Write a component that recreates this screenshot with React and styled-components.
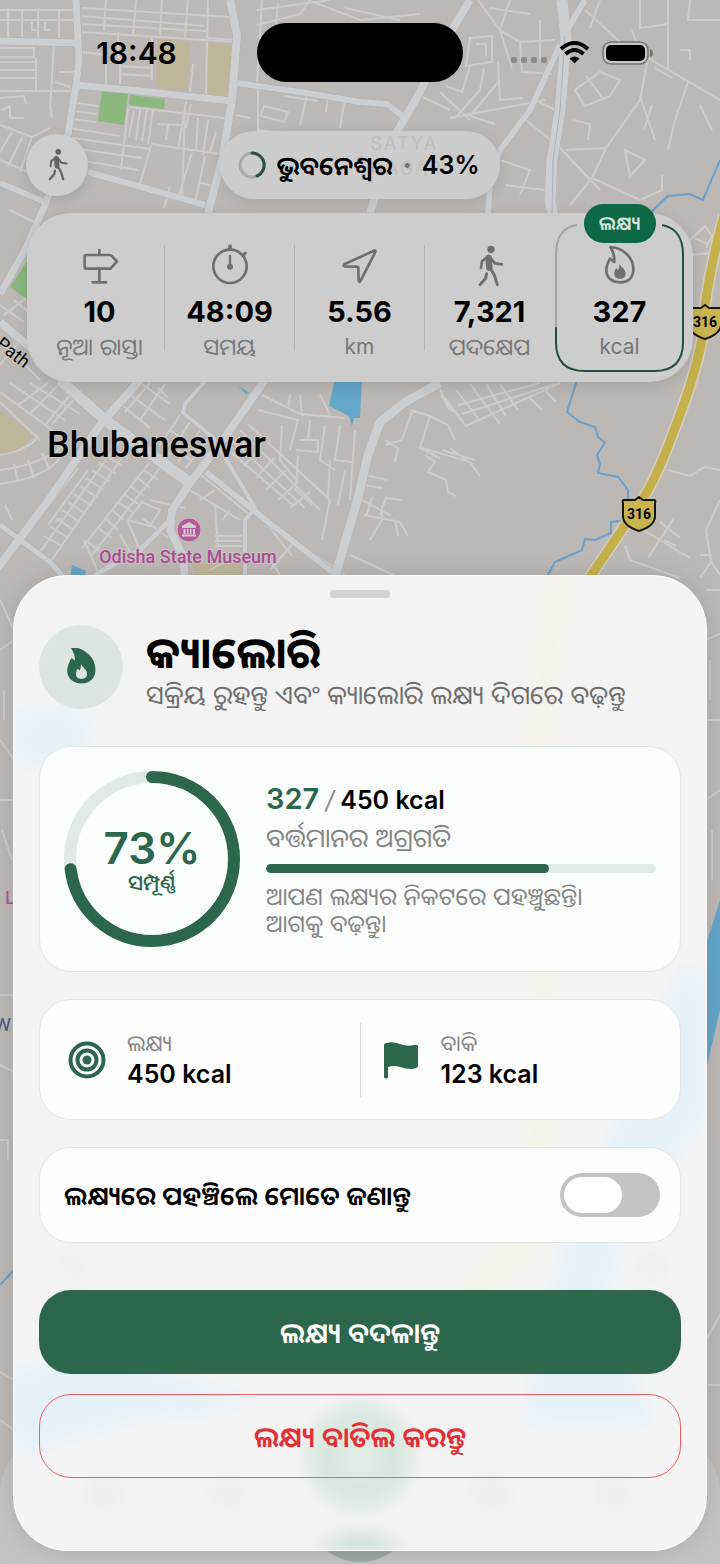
import React, { useState } from "react";
import styled, { createGlobalStyle } from "styled-components";

const GREEN = "#2c664d";

const MAJOR_ROADS = [
  { d: "M76 0 L79 60 L76 85 L68 135 L58 170 L45 205 L25 250 L0 294", w: 6 },
  { d: "M0 41 L78 43", w: 6 },
  { d: "M76 85 L130 90 L232 101", w: 6 },
  { d: "M230 0 L237 35 L232 100 L222 160 L208 213", w: 7 },
  { d: "M237 83 L300 92 L360 102 L387 104 L405 118", w: 5 },
  { d: "M0 183 L45 202", w: 5 },
  { d: "M88 172 L205 205", w: 5 },
  { d: "M470 0 L440 50 L420 92 L395 135 L370 213", w: 7 },
  { d: "M562 0 L566 40 L560 110 L552 160 L550 200 L553 215", w: 10 },
  { d: "M585 0 L566 32", w: 5 },
  { d: "M560 45 L530 110 L500 150 L490 180 L488 215", w: 5 },
  { d: "M0 322 L36 352 L80 400", w: 7 },
  { d: "M60 380 L105 420 L190 483", w: 10 },
  { d: "M140 380 L100 425 L50 498 L15 545 L-4 570", w: 7 },
  { d: "M265 380 L225 437 L190 483 L172 510 L170 530 L183 556 L185 580", w: 7 },
  { d: "M208 378 L185 404 L183 413 L213 437 L255 508 L245 520 L245 580", w: 3 },
  { d: "M206 472 L262 517 L340 578", w: 5 },
  { d: "M440 383 L405 402 L380 422 L368 455 L358 498 L334 580", w: 8 },
  { d: "M0 525 L50 562 L66 580", w: 4 },
  { d: "M168 522 L140 550 L100 572 L90 580", w: 4 },
];

const MINOR_ROADS = [
  // north west
  "M0 10 H75 M0 20 H76 M8 8 V41 M22 9 V41 M38 8 V41 M59 10 V41 M32 22 V30 H37 M45 22 V30 H50",
  "M0 48 H34 V57 H0 M0 62 H36 M0 70 H36 M0 78 H36 M36 58 V90 M54 43 L50 110 M0 91 L72 91 M59 72 H74 M55 82 L70 87",
  "M0 98 L24 96 L26 104 M2 110 L10 106 V118 H24 M50 105 L52 118 M0 125 L32 137 L50 128 M32 137 L20 172 M12 132 L0 152 M22 138 L8 166 M0 160 L28 172",
  "M82 8 L230 17 M82 16 L205 26 M82 24 L206 31 M82 32 L236 42 M106 0 L104 30 M136 0 L133 34 M162 0 L160 35 M188 0 L185 38 M208 0 L206 94 M118 32 V58",
  "M82 52 L106 55 V84 M120 55 V84 M120 66 L152 68 M152 38 V80 M120 74 L152 76 M193 64 L190 92 M207 38 L236 40",
  // city centre blocks
  "M76 103 L98 106 M74 111 L97 114 M72 119 L96 122 M69 128 L120 136 M66 137 L150 149 M64 147 L142 158 M60 157 L138 170 M128 108 L121 170 M134 110 L129 137 M140 110 L136 140 M147 110 L142 141 M153 110 L148 144",
  "M129 107 L225 118 M186 102 L178 150 M191 104 L186 128 M151 144 L220 154 M198 118 L196 150 M157 124 L182 125 M168 125 L166 140 M208 120 L203 155 M216 132 L210 152 M151 146 L140 184 M192 153 L178 198 M205 156 L195 203 M170 186 L164 208 M198 182 L212 186 M185 110 L182 200",
  // north east
  "M257 10 L330 0 M257 25 L300 14 L310 0 M262 0 L257 83 M278 4 L276 24 M308 0 L360 20 L420 14 M262 55 L290 48 M345 8 L400 20",
  "M264 106 L288 112 L284 122 L261 116 Z M236 115 L250 118 M258 84 V130 L300 135 M307 95 L300 125 M328 96 L326 112 M345 98 L340 128 M284 96 L318 101",
  "M478 0 L500 30 L520 42 L555 40 M490 8 L530 14 M510 0 L500 30 L512 68 M470 38 L492 36 V62 L466 66 Z M476 44 H486 V56 M520 42 L522 72 L552 74 M540 20 V58 M470 66 L462 92 L446 86 M484 68 L480 90 L455 118 M498 62 L500 100 L522 98 M500 80 L470 116 L495 124 M420 96 L450 110 M440 92 L470 120 M450 118 L545 100",
  "M585 10 L620 42 L648 58 L640 100 L606 148 L565 150 M600 0 L590 28 M640 0 V28 L668 24 M668 0 V70 M632 30 L640 54 M690 0 L688 20 H720 M648 58 L720 100 M688 82 L675 120 L668 150 M575 90 L600 72 L620 80 L610 96 L585 106 Z M586 76 L604 100 M572 120 L590 124 L588 140",
  "M640 96 L655 140 M652 105 L644 130 M535 100 L560 112 M520 115 L560 148 L600 190 M606 148 L592 178 L570 205 M592 178 L640 200 M625 150 L645 160 L630 176 Z M500 160 L530 170 L520 195 M505 185 L545 190 M662 175 V190 L640 200 M690 60 V50 H680 M700 105 L712 130 M655 68 L672 78",
  // west of the stats card
  "M0 305 L24 322 M14 300 L36 318 M4 315 L26 298 M0 340 L40 380 M20 340 L0 365 M10 210 L40 225",
  // south west
  "M0 392 L55 432 M10 383 L65 420 M30 383 L80 414 M0 402 L40 440 M0 470 Q40 465 65 445 M0 484 Q45 478 60 458 M14 464 L18 482 M28 460 L34 478 M42 453 L50 470 M0 455 Q30 450 38 436",
  "M60 383 L30 414 M82 390 L52 424 M48 383 L18 405 M70 395 L45 425",
  "M78 468 L30 530 M64 478 L20 535 M88 470 L48 525 M5 505 L12 520",
  "M120 440 L40 552 M130 446 L52 560 M110 446 L128 458 M104 454 L122 466 M98 462 L116 474 M92 470 L110 482 M86 478 L104 490 M80 486 L98 498 M74 494 L92 506 M68 502 L86 514 M62 510 L80 522 M56 518 L74 530 M50 526 L68 538 M55 522 L62 518 M44 536 L62 546",
  "M160 468 L92 555 M150 462 L82 548 M144 470 L158 480 M138 478 L150 488 M130 486 L144 496 M124 494 L138 504 M118 502 L132 512 M112 510 L124 520 M105 518 L118 530 M98 528 L112 538 M88 542 L100 552",
  "M128 520 L142 502 L160 510 L150 526 Z M142 518 L168 538 M128 522 L140 550 M84 540 L98 572 M120 535 L135 560",
  "M130 395 L165 420 M142 384 L170 404 M150 383 L125 412 M165 384 L140 420 M122 405 L150 428 M158 388 L168 398",
  "M180 415 L160 445 M190 422 L168 456 M200 430 L178 462 M208 438 L186 468 M170 430 L198 450 M164 440 L190 460",
  // south centre
  "M195 470 L250 515 M190 490 L240 520 M200 500 L215 490 M215 505 L218 548 M215 536 H242 M215 541 H242 M215 546 H242 M230 510 L222 520",
  "M240 430 L320 510 M232 440 L305 508 M226 448 L294 506 M248 424 L330 500 M232 456 L250 436 M244 466 L262 446 M256 478 L274 458 M266 490 L286 470 M278 500 L298 482 M290 508 L310 492",
  "M262 395 L300 414 L345 418 M258 410 L298 420 L290 450 M300 395 L302 416 M282 425 L280 460 L298 482 M300 440 H318 V452 L296 450 M310 420 L308 440 M325 425 L320 460 L335 470 M330 460 L328 500 M298 455 L296 490 L312 505 M330 500 L322 540 M340 425 L335 460 L352 462 M345 470 L338 505 M290 395 L288 408 M320 395 L330 415 M355 430 L350 500",
  "M256 510 L292 556 M300 545 L345 575 M268 556 L280 575 M350 555 L400 578 M362 500 L390 515",
  "M150 500 L185 508 M210 570 L235 556 M296 540 L270 570",
  // east side
  "M410 410 L430 416 L448 425 L455 440 M412 412 L402 440 L386 445 M430 416 L420 448 L440 458 M422 448 L470 462 L480 476 M442 450 L475 460 M450 448 L472 464 M425 455 L435 462 L428 472 L446 480 L448 492 L456 496 M385 440 L398 448 L395 462 M366 475 L388 480 M364 485 L382 488 M372 498 L366 516 M380 515 L386 498 L402 500 M364 515 L400 522 L408 536 M382 505 V520 L370 540 M395 520 L398 536",
  "M445 398 L466 426 L560 383 M456 390 L478 418 M470 384 L500 424 M486 384 L506 416 M500 384 L518 410 M438 384 L448 408 L455 412 M458 405 L540 383 M462 414 L555 384 M530 398 L542 410 M545 390 L556 402 M440 395 L452 410",
  "M668 470 L690 476 L704 467 L720 470 M720 500 L706 530 L711 562 L700 578 M711 562 L720 575 M640 528 L668 545 L690 558 M674 518 L648 558 M660 522 L670 530 L680 538 M664 540 L676 546 M625 545 L630 560 L680 578 M700 555 H712",
  "M690 240 L705 226 L712 236 L706 248 M694 238 L708 244 M690 255 L720 252",
  // strips beside the sheet
  "M0 600 L14 630 M0 650 L14 640 M4 690 V720 M0 740 L14 760 M0 800 H14 M2 830 L12 860 M0 995 H14 M0 1065 L14 1072 M0 1140 H8 V1160 M0 1372 L14 1380 M0 1420 L14 1430 M706 590 H720 M706 640 L720 634 M710 660 V700 M706 720 H720 M706 800 L720 790 M712 830 V880 M706 1340 L720 1315 M708 1385 H720",
];

const STATS = [
  { icon: "signpost", value: "10", label: "ନୂଆ ରାସ୍ତା" },
  { icon: "timer", value: "48:09", label: "ସମୟ" },
  { icon: "arrow", value: "5.56", label: "km", latin: true },
  { icon: "walk", value: "7,321", label: "ପଦକ୍ଷେପ" },
  { icon: "flame", value: "327", label: "kcal", latin: true, goal: true },
];

const FLAME_OUTER =
  "M31 0 C70 2 100 32 100 66 C100 92 84 106 60 106 C34 106 19 90 19 70 C19 56 24 46 30 35 L43 45 C44 28 40 14 31 0 Z";
const FLAME_INNER =
  "M58 48 C60 59 77 65 77 80 C77 90 70 95 60 95 C50 95 43 90 43 80 C43 73 45 68 49 64 L54 70 C58 63 59 55 58 48 Z";

function StatIcon({ name, size = 40 }) {
  const line = {
    fill: "none",
    stroke: "currentColor",
    strokeWidth: 8,
    strokeLinecap: "round",
    strokeLinejoin: "round",
  };

  return (
    <svg width={size} height={size} viewBox="0 0 120 120" overflow="visible" aria-hidden="true">
      {name === "signpost" && (
        <path {...line} d="M18 24 H88 Q92 24 95 27 L111 43 L95 61 Q92 65 88 65 H18 Q14 65 14 61 V28 Q14 24 18 24 Z M58 9 V24 M58 65 V106 M38 106 H78" />
      )}
      {name === "timer" && (
        <g {...line}>
          <circle cx="60" cy="58" r="50" />
          <path d="M60 -2 V6" strokeWidth="11" />
          <path d="M100 24 L106 18" strokeWidth="9" />
          <path d="M60 27 V58" strokeWidth="7" />
          <circle cx="60" cy="59" r="5" />
        </g>
      )}
      {name === "arrow" && (
        <path {...line} d="M102 11 L13 52 Q8 57 15 58 L51 59 Q55 59 55 63 L56 101 Q58 108 62 101 L106 15 Q107 9 102 11 Z" />
      )}
      {name === "walk" && (
        <g {...line}>
          <circle cx="63" cy="7" r="11" fill="currentColor" stroke="none" />
          <path d="M56 33 L58 62" strokeWidth="19" />
          <path d="M60 62 L73 84 L82 113" strokeWidth="9" />
          <path d="M50 80 L47 94 L30 113" strokeWidth="9" />
          <path d="M50 32 L36 43 L33 63" />
          <path d="M62 33 L75 49 L96 52" />
        </g>
      )}
      {name === "flame" && (
        <>
          <path {...line} d={FLAME_OUTER} />
          <path d={FLAME_INNER} fill="currentColor" />
        </>
      )}
    </svg>
  );
}

function Shield({ x, y }) {
  return (
    <g transform={`translate(${x} ${y})`}>
      <path
        d="M0 -17 L4 -14 H15 Q17 -14 16 -11 V2 Q16 12 0 17 Q-16 12 -16 2 V-11 Q-17 -14 -15 -14 H-4 Z"
        fill="#c9b44e"
        stroke="#17150c"
        strokeWidth="2"
      />
      <text x="0" y="5" textAnchor="middle" fontFamily="Roboto, sans-serif" fontSize="14" fontWeight="700">
        316
      </text>
    </g>
  );
}

function CityMap() {
  return (
    <MapCanvas viewBox="0 0 720 1564" preserveAspectRatio="xMidYMin slice" aria-hidden="true">
      <rect width="720" height="1564" fill="#bcb8b5" />
      <g fill="#8bb87d">
        <path d="M102 92 L128 93 L124 125 L98 121 Z M130 95 L165 99 L164 109 L129 105 Z M10 287 L28 260 V300 Z" />
      </g>
      <g fill="#bfb59b">
        <path d="M158 38 L190 42 L188 90 L156 88 Z M209 43 L232 45 L229 96 L204 94 Z M0 410 L35 435 L20 450 L0 456 Z M193 562 L245 564 V580 H193 Z" />
      </g>
      <g fill="#63a6c8">
        <path d="M335 378 H362 L360 418 L354 418 L352 426 L349 416 L329 406 Z M72 565 L86 571 L84 580 H70 Z M238 386 L250 393 L246 394 Z M720 900 L706 945 V1070 L720 1010 Z" />
      </g>
      <g fill="none" stroke="#cecccb" strokeWidth="2">
        {MINOR_ROADS.map((d, idx) => (
          <path key={idx} d={d} />
        ))}
      </g>
      <g fill="none" stroke="#adb0b9" strokeLinejoin="round">
        {MAJOR_ROADS.map((road, idx) => (
          <path key={idx} d={road.d} strokeWidth={road.w + 2} />
        ))}
      </g>
      <g fill="none" stroke="#cdced0" strokeLinejoin="round">
        {MAJOR_ROADS.map((road, idx) => (
          <path key={idx} d={road.d} strokeWidth={road.w + 1} />
        ))}
      </g>
      <path d="M565 36 L560 110 L553 160 L552 215" fill="none" stroke="#adb1ba" />
      <g fill="none" stroke="#69a0cd" strokeWidth="2">
        <path d="M720 160 L703 200 L690 194 L668 196 L650 213 M577 380 L567 412 L580 422 L595 427 L598 437 L605 443 L597 455 L600 464 L598 473 L618 477 L628 490 V520 L611 522 V533 L595 540 L585 539 L582 550 L555 562 L545 580 M0 1285 L14 1270" />
      </g>
      <g fill="none" strokeLinejoin="round">
        <path d="M724 215 Q704 290 702 340 Q694 380 673 433 Q655 482 640 503 L588 580" stroke="#d2cfc4" strokeWidth="12" />
        <path d="M724 215 Q704 290 702 340 Q694 380 673 433 Q655 482 640 503 L588 580" stroke="#c5b04b" strokeWidth="9" />
      </g>
      <Shield x={639} y={514} />
      <Shield x={705} y={322} />

      <g fontFamily="Roboto, sans-serif">
        <text x="47" y="457" fontSize="36" fontWeight="500" stroke="#c9c7c5" strokeWidth="2" paintOrder="stroke">
          Bhubaneswar
        </text>
        <text x="188" y="563" fontSize="18" fontWeight="500" fill="#ad4c92" textAnchor="middle" stroke="#c9c7c5" strokeWidth="2" paintOrder="stroke">
          Odisha State Museum
        </text>
        <text x="-5" y="346" fontSize="18" transform="rotate(38 -5 346)">
          Path
        </text>
        <text x="5" y="904" fontSize="19" fill="#ad4c92">
          L
        </text>
        <text x="-6" y="1031" fontSize="19" fill="#4a5683">
          W
        </text>
      </g>
      <circle cx="189" cy="530" r="12" fill="#b35c9c" stroke="#cbbfc7" />
      <path
        d="M189 522 L196 526 V528 H182 V526 Z M183.500 529 H185.500 V534 H183.500 Z M187 529 H188.500 V534 H187 Z M190 529 H191.500 V534 H190 Z M193 529 H195 V534 H193 Z M182 534.500 H196 V536.500 H182 Z"
        fill="#d3cdd1"
      />

      <rect x="0" y="1430" width="720" height="190" rx="64" fill="#c3c3c3" />
      <circle cx="360" cy="1508" r="54" fill="#9aa8a1" />
    </MapCanvas>
  );
}

// colours of the map showing faintly through the frosted sheet
function SheetGlow() {
  return (
    <GlowCanvas viewBox="0 0 694 976" preserveAspectRatio="none" aria-hidden="true">
      <defs>
        <filter id="soft" x="-50%" y="-50%" width="200%" height="200%">
          <feGaussianBlur stdDeviation="10" />
        </filter>
      </defs>
      <g filter="url(#soft)">
        <path d="M545 0 L525 180 L530 480 L520 660 L440 740" fill="none" stroke="#f4f3e4" strokeWidth="16" />
        <path d="M0 135 H70 V190 H0 Z M-20 810 L70 770 L250 830 L120 845 L0 880 Z" fill="#e4f1f9" />
        <path d="M670 390 L694 400 V540 L620 640 L590 720 L640 850 H510 L560 640 L600 560 Z" fill="#e4f1f9" />
        <circle cx="347" cy="882" r="52" fill="#d6e6de" />
        <rect x="332" y="858" width="10" height="48" fill="#eaf1ed" />
        <rect x="352" y="858" width="10" height="48" fill="#eaf1ed" />
        <path d="M300 976 Q347 950 394 976 Z" fill="#b9d2c6" />
        <g fill="#ededed">
          <circle cx="90" cy="920" r="20" />
          <circle cx="215" cy="920" r="20" />
          <circle cx="478" cy="920" r="22" />
          <circle cx="602" cy="920" r="20" />
          <circle cx="60" cy="692" r="16" />
          <circle cx="640" cy="692" r="16" />
        </g>
      </g>
    </GlowCanvas>
  );
}

function StatusBar() {
  return (
    <StatusWrap>
      <Clock>18:48</Clock>
      <Island />
      <StatusIcons>
        <svg width="36" height="6" viewBox="0 0 36 6" fill="#8d8a88">
          <rect width="6" height="6" rx="2" />
          <rect x="10" width="6" height="6" rx="2" />
          <rect x="20" width="6" height="6" rx="2" />
          <rect x="30" width="6" height="6" rx="2" />
        </svg>
        <svg width="31" height="23" viewBox="0 0 31 23">
          <path d="M2 8 Q15.500 -4 29 8" fill="none" stroke="#000" strokeWidth="4" />
          <path d="M6.500 13 Q15.500 5 24.500 13" fill="none" stroke="#000" strokeWidth="4" />
          <path d="M10.500 17.500 Q15.500 13.500 20.500 17.500 L15.500 22.500 Z" />
        </svg>
        <svg width="51" height="24" viewBox="0 0 51 24">
          <rect x="1" y="1" width="45" height="22" rx="8" fill="#c9c7c5" stroke="#75726f" strokeWidth="1.500" />
          <rect x="4" y="4" width="39" height="16" rx="5" />
          <path d="M48 8 Q51 9 51 12 Q51 15 48 16 Z" fill="#75726f" />
        </svg>
      </StatusIcons>
    </StatusWrap>
  );
}

function StatsPanel() {
  return (
    <StatsCard>
      {STATS.map((stat, idx) => (
        <React.Fragment key={stat.icon}>
          {idx > 0 && <StatDivider $hidden={stat.goal} />}
          <StatCell>
            {stat.goal && (
              <>
                <GoalOutline viewBox="0 0 130 150" preserveAspectRatio="none" aria-hidden="true">
                  <path d="M1 105 V32 C1 14 8 4 22 2" stroke="#a3a3a3" />
                  <path d="M108 2 C122 5 129 14 129 32 V120 Q129 149 100 149 H30 Q1 149 1 120 V105" stroke="#214f3b" />
                </GoalOutline>
                <GoalBadge>ଲକ୍ଷ୍ୟ</GoalBadge>
              </>
            )}
            <StatIcon name={stat.icon} />
            <StatValue>{stat.value}</StatValue>
            <StatLabel $latin={stat.latin}>{stat.label}</StatLabel>
          </StatCell>
        </React.Fragment>
      ))}
    </StatsCard>
  );
}

function App() {
  const [notify, setNotify] = useState(false);

  return (
    <Screen>
      <GlobalStyle />
      <CityMap />
      <Content>
        <StatusBar />
        <TopRow>
          <RoundButton type="button" aria-label="Walk">
            <StatIcon name="walk" size={31} />
          </RoundButton>
          <CityPill>
            <PillMapText aria-hidden="true">
              SATYA
              <br />
              NAGAR
            </PillMapText>
            <svg width="28" height="28" viewBox="0 0 28 28" fill="none" strokeWidth="3">
              <circle cx="14" cy="14" r="12" stroke="#a9abaa" />
              <path d="M14 2 A12 12 0 0 1 19 25" stroke="#27523f" strokeLinecap="round" />
            </svg>
            <City>ଭୁବନେଶ୍ୱର</City>
            <Dim>·</Dim>
            <span>43%</span>
          </CityPill>
        </TopRow>
        <StatsPanel />

        <Sheet>
          <SheetGlow />
          <SheetBody>
            <Handle />
            <SheetHeader>
              <HeaderIcon>
                <svg width="39" height="39" viewBox="0 0 120 120">
                  <path d={FLAME_OUTER} fill={GREEN} stroke={GREEN} strokeWidth="6" strokeLinejoin="round" />
                  <path d={FLAME_INNER} fill="#dde5e1" />
                </svg>
              </HeaderIcon>
              <div>
                <Title>କ୍ୟାଲୋରି</Title>
                <Subtitle>ସକ୍ରିୟ ରୁହନ୍ତୁ ଏବଂ କ୍ୟାଲୋରି ଲକ୍ଷ୍ୟ ଦିଗରେ ବଢ଼ନ୍ତୁ</Subtitle>
              </div>
            </SheetHeader>

            <ProgressCard>
              <RingWrap>
                <svg width="178" height="178" viewBox="0 0 178 178" fill="none" strokeWidth="12">
                  <circle cx="89" cy="89" r="82" stroke="#e0e9e4" />
                  <circle
                    cx="89"
                    cy="89"
                    r="82"
                    stroke={GREEN}
                    strokeLinecap="round"
                    pathLength="100"
                    strokeDasharray="73 100"
                    transform="rotate(-90 89 89)"
                  />
                </svg>
                <RingText>
                  <Percent>73%</Percent>
                  <Done>ସମ୍ପୂର୍ଣ୍ଣ</Done>
                </RingText>
              </RingWrap>
              <ProgressInfo>
                <Amount>
                  <strong>327</strong>
                  <i>/</i>
                  <span>450 kcal</span>
                </Amount>
                <Caption>ବର୍ତ୍ତମାନର ଅଗ୍ରଗତି</Caption>
                <Track>
                  <Fill style={{ width: `${(327 / 450) * 100}%` }} />
                </Track>
                <Message>
                  ଆପଣ ଲକ୍ଷ୍ୟର ନିକଟରେ ପହଞ୍ଚୁଛନ୍ତି।
                  <br />
                  ଆଗକୁ ବଢ଼ନ୍ତୁ।
                </Message>
              </ProgressInfo>
            </ProgressCard>

            <GoalCard>
              <GoalItem>
                <svg width="38" height="38" viewBox="0 0 38 38" fill="none" stroke={GREEN} strokeWidth="4">
                  <circle cx="19" cy="19" r="16.500" />
                  <circle cx="19" cy="19" r="9.500" />
                  <circle cx="19" cy="19" r="4.500" fill={GREEN} stroke="none" />
                </svg>
                <div>
                  <GoalLabel>ଲକ୍ଷ୍ୟ</GoalLabel>
                  <GoalValue>450 kcal</GoalValue>
                </div>
              </GoalItem>
              <GoalDivider />
              <GoalItem>
                <svg width="38" height="38" viewBox="0 0 38 38" fill={GREEN}>
                  <path d="M2 4 Q2 2 5 2 Q10 0 18 3 Q26 6 32 4 Q36 3 36 6 V24 Q36 28 29 28 Q24 28 18 26 Q12 24 6 26 V36 Q6 37.500 4 37.500 Q2 37.500 2 36 Z" />
                </svg>
                <div>
                  <GoalLabel>ବାକି</GoalLabel>
                  <GoalValue>123 kcal</GoalValue>
                </div>
              </GoalItem>
            </GoalCard>

            <NotifyCard>
              <NotifyLabel htmlFor="notify">ଲକ୍ଷ୍ୟରେ ପହଞ୍ଚିଲେ ମୋତେ ଜଣାନ୍ତୁ</NotifyLabel>
              <Switch id="notify" type="checkbox" checked={notify} onChange={(e) => setNotify(e.target.checked)} />
            </NotifyCard>

            <Actions>
              <ActionButton type="button">ଲକ୍ଷ୍ୟ ବଦଳାନ୍ତୁ</ActionButton>
              <ActionButton type="button" $danger>
                ଲକ୍ଷ୍ୟ ବାତିଲ କରନ୍ତୁ
              </ActionButton>
            </Actions>
          </SheetBody>
        </Sheet>
      </Content>
    </Screen>
  );
}

export default App;

const GlobalStyle = createGlobalStyle`
  * {
    box-sizing: border-box;
  }

  body {
    margin: 0;
    font-family: Inter, "Noto Sans Oriya", "Noto Sans", sans-serif;
    color: #000;
  }

  h1, p {
    margin: 0;
  }

  svg {
    display: block;
    flex-shrink: 0;
  }
`;

const Screen = styled.main`
  position: relative;
  min-height: 100vh;
  overflow: hidden;
`;

const MapCanvas = styled.svg`
  position: absolute;
  inset: 0;
  width: 100%;
  height: 100%;
`;

const Content = styled.div`
  position: relative;
`;

const StatusWrap = styled.header`
  display: grid;
  grid-template-columns: 1fr auto 1fr;
  align-items: center;
  padding: 23px 0 49px;
`;

const Clock = styled.div`
  padding-left: 16px;
  font-size: 30px;
  font-weight: 600;
  text-align: center;
`;

const Island = styled.div`
  width: 206px;
  height: 59px;
  border-radius: 30px;
  background: #000;
`;

const StatusIcons = styled.div`
  display: flex;
  align-items: center;
  gap: 12px;
  padding-left: 48px;

  svg:first-child {
    margin-top: 15px;
  }
`;

const TopRow = styled.div`
  display: grid;
  grid-template-columns: 1fr auto 1fr;
  align-items: center;
  padding: 0 26px;
`;

const RoundButton = styled.button`
  display: flex;
  align-items: center;
  justify-content: center;
  width: 62px;
  height: 62px;
  padding: 0;
  border: 0;
  border-radius: 50%;
  background: #cecece;
  color: #656565;
  box-shadow: 0 4px 14px rgba(0, 0, 0, 0.12);
`;

const CityPill = styled.div`
  position: relative;
  display: flex;
  align-items: center;
  gap: 10px;
  height: 68px;
  padding: 0 20px 0 18px;
  border-radius: 34px;
  background: rgba(205, 205, 206, 0.94);
  box-shadow: 0 4px 14px rgba(0, 0, 0, 0.1);
  font-size: 25px;
  font-weight: 600;
  white-space: nowrap;

  span {
    position: relative;
  }
`;

const City = styled.span`
  font-size: 26px;
`;

const Dim = styled.b`
  position: relative;
  color: #747474;
`;

const PillMapText = styled.div`
  position: absolute;
  top: 0;
  left: 150px;
  color: #bebebe;
  font-size: 18px;
  font-weight: 400;
  line-height: 25px;
  letter-spacing: 2px;
`;

const StatsCard = styled.section`
  display: flex;
  align-items: center;
  margin: 14px 27px 0;
  padding: 10px 9px 10px 8px;
  border-radius: 44px;
  background: #cdcdcd;
  box-shadow: 0 4px 16px rgba(0, 0, 0, 0.12);
`;

const StatCell = styled.div`
  position: relative;
  display: flex;
  flex: 1 1 0;
  flex-direction: column;
  align-items: center;
  min-width: 0;
  padding: 24px 0 12px;
  color: #6f6f6f;
`;

const StatDivider = styled.div`
  width: 1px;
  height: 106px;
  background: ${(props) => (props.$hidden ? "transparent" : "#b3b3b3")};
`;

const GoalOutline = styled.svg`
  position: absolute;
  inset: 0;
  width: 100%;
  height: 100%;
  fill: none;
  stroke-width: 2px;
`;

const GoalBadge = styled.div`
  position: absolute;
  top: -19px;
  left: 50%;
  width: 72px;
  margin-left: -36px;
  border-radius: 20px;
  background: #0d6846;
  color: #d8e2dd;
  font-size: 19px;
  font-weight: 600;
  line-height: 39px;
  text-align: center;
`;

const StatValue = styled.div`
  margin-top: 7px;
  color: #000;
  font-size: 29px;
  font-weight: 700;
  line-height: 36px;
`;

const StatLabel = styled.div`
  margin-top: 4px;
  color: #777;
  font-size: ${(props) => (props.$latin ? "21px" : "23px")};
  line-height: 26px;
  white-space: nowrap;
`;

const Sheet = styled.section`
  position: relative;
  margin: 193px 13px 13px;
  overflow: hidden;
  border: 1px solid #fff;
  border-radius: 54px;
  background: #f4f3f3;
  box-shadow: 0 0 24px rgba(0, 0, 0, 0.12);
`;

const GlowCanvas = styled.svg`
  position: absolute;
  inset: 0;
  width: 100%;
  height: 100%;
`;

const SheetBody = styled.div`
  position: relative;
  padding: 14px 25px 72px;
`;

const Handle = styled.div`
  width: 60px;
  height: 8px;
  margin: 0 auto;
  border-radius: 4px;
  background: #d3d3d3;
`;

const SheetHeader = styled.header`
  display: flex;
  align-items: center;
  gap: 23px;
  height: 84px;
  margin-top: 27px;
`;

const HeaderIcon = styled.div`
  display: flex;
  align-items: center;
  justify-content: center;
  width: 84px;
  height: 84px;
  border-radius: 50%;
  background: #dde5e1;
`;

const Title = styled.h1`
  margin-top: 6px;
  font-size: 43px;
  font-weight: 700;
  line-height: 50px;
`;

const Subtitle = styled.p`
  color: #6e6e6e;
  font-size: 26px;
  line-height: 36px;
  white-space: nowrap;
`;

const Card = styled.section`
  display: flex;
  align-items: center;
  border: 1px solid #dfe7e3;
  border-radius: 32px;
  background: #fdfdfd;
`;

const ProgressCard = styled(Card)`
  gap: 25px;
  height: 226px;
  margin-top: 37px;
  padding: 0 24px 0 23px;
  background: #fafdfb;
`;

const RingWrap = styled.div`
  display: grid;
  place-items: center;

  > * {
    grid-area: 1 / 1;
  }
`;

const RingText = styled.div`
  color: ${GREEN};
  text-align: center;
`;

const Percent = styled.div`
  margin-top: 4px;
  font-size: 44px;
  font-weight: 600;
  line-height: 44px;
`;

const Done = styled.div`
  font-size: 21px;
  font-weight: 500;
  line-height: 26px;
`;

const ProgressInfo = styled.div`
  flex: 1;
  min-width: 0;
`;

const Amount = styled.div`
  display: flex;
  align-items: baseline;
  gap: 6px;
  font-size: 25px;
  font-weight: 600;
  line-height: 36px;

  strong {
    color: ${GREEN};
    font-size: 29px;
    font-weight: 600;
  }

  i {
    color: #8a8a8a;
    font-weight: 400;
  }
`;

const Caption = styled.div`
  margin-top: 4px;
  color: #858585;
  font-size: 26px;
  line-height: 32px;
`;

const Track = styled.div`
  height: 9px;
  margin: 10px 0;
  overflow: hidden;
  border-radius: 5px;
  background: #e0e9e4;
`;

const Fill = styled.div`
  height: 100%;
  border-radius: 5px;
  background: ${GREEN};
`;

const Message = styled.p`
  color: #858585;
  font-size: 24px;
  line-height: 27px;
  white-space: nowrap;
`;

const GoalCard = styled(Card)`
  display: grid;
  grid-template-columns: 1fr auto 1fr;
  height: 121px;
  margin-top: 27px;
`;

const GoalItem = styled.div`
  display: flex;
  align-items: center;
  gap: 21px;
  padding-left: 28px;

  &:last-child {
    padding-left: 21px;
  }
`;

const GoalDivider = styled.div`
  width: 1px;
  height: 74px;
  background: #dcdcdc;
`;

const GoalLabel = styled.div`
  color: #858585;
  font-size: 22px;
  line-height: 28px;
`;

const GoalValue = styled.div`
  font-size: 25px;
  font-weight: 600;
  line-height: 34px;
`;

const NotifyCard = styled(Card)`
  justify-content: space-between;
  height: 96px;
  margin-top: 27px;
  padding: 0 20px 0 24px;
`;

const NotifyLabel = styled.label`
  font-size: 26px;
  font-weight: 600;
`;

const Switch = styled.input`
  appearance: none;
  width: 100px;
  height: 44px;
  margin: 0;
  padding: 4px;
  border-radius: 22px;
  background: ${(props) => (props.checked ? GREEN : "#c1c3c4")};

  &::before {
    content: "";
    display: block;
    width: 58px;
    height: 36px;
    margin-left: ${(props) => (props.checked ? "34px" : "0")};
    border-radius: 18px;
    background: #fff;
  }
`;

const Actions = styled.div`
  display: flex;
  flex-direction: column;
  gap: 20px;
  margin-top: 47px;
`;

const ActionButton = styled.button`
  height: 84px;
  border: ${(props) => (props.$danger ? "1px solid #ee6065" : "0")};
  border-radius: 32px;
  background: ${(props) => (props.$danger ? "transparent" : GREEN)};
  color: ${(props) => (props.$danger ? "#e23035" : "#fff")};
  font-family: inherit;
  font-size: 28px;
  font-weight: 600;
`;
